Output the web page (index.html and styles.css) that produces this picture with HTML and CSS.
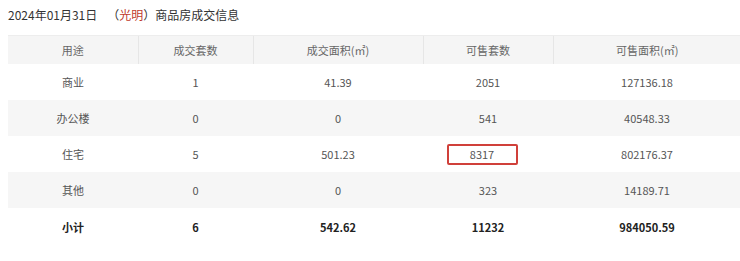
FILE: index.html
```html
<!DOCTYPE html>
<html lang="zh-CN">
<head>
<meta charset="utf-8">
<link rel="stylesheet" href="styles.css">
</head>
<body>
<div class="page">
  <div class="title">2024年01月31日<span class="gap"></span>（<span class="area">光明</span>）商品房成交信息</div>
  <table class="deal">
    <colgroup>
      <col class="c1"><col class="c2"><col class="c3"><col class="c4"><col class="c5">
    </colgroup>
    <thead>
      <tr><th>用途</th><th>成交套数</th><th>成交面积(㎡)</th><th>可售套数</th><th>可售面积(㎡)</th></tr>
    </thead>
    <tbody>
      <tr><td>商业</td><td>1</td><td>41.39</td><td>2051</td><td>127136.18</td></tr>
      <tr class="alt"><td>办公楼</td><td>0</td><td>0</td><td>541</td><td>40548.33</td></tr>
      <tr><td>住宅</td><td>5</td><td>501.23</td><td><span class="mark">8317</span></td><td>802176.37</td></tr>
      <tr class="alt"><td>其他</td><td>0</td><td>0</td><td>323</td><td>14189.71</td></tr>
      <tr class="total"><td>小计</td><td>6</td><td>542.62</td><td>11232</td><td>984050.59</td></tr>
    </tbody>
  </table>
</div>
</body>
</html>
```
FILE: styles.css
```css
html, body {
  margin: 0;
  padding: 0;
  background: #fff;
  overflow: hidden;
}
.page {
  padding: 7px 0 0 8px;
  font-family: "Noto Sans CJK SC", "Microsoft YaHei", sans-serif;
  color: #555;
}
.title {
  font-size: 12px;
  line-height: 16px;
  color: #333;
}
.title .gap {
  display: inline-block;
  width: 10px;
}
.title .area {
  color: #c0392b;
}
.deal {
  margin-top: 12px;
  width: 733px;
  border-collapse: collapse;
  table-layout: fixed;
  font-size: 11px;
}
.c1 { width: 130px; }
.c2 { width: 115px; }
.c3 { width: 170px; }
.c4 { width: 130px; }
.c5 { width: 188px; }
.deal th {
  height: 28px;
  padding: 0;
  background: #f5f5f5;
  font-weight: normal;
  color: #666;
  border-top: 1px solid #ededed;
  border-left: 1px solid #e6e6e6;
}
.deal th:first-child { border-left: none; }
.deal td {
  height: 36px;
  padding: 0;
  text-align: center;
  color: #555;
}
.deal tr.alt td {
  background: #f6f6f6;
}
.deal tr.total td {
  font-weight: bold;
  color: #222;
  height: 37px;
}
.mark {
  display: inline-block;
  width: 67px;
  height: 17px;
  line-height: 17px;
  border: 2px solid #d0403a;
  border-radius: 2px;
  margin-right: 12px;
}
```
